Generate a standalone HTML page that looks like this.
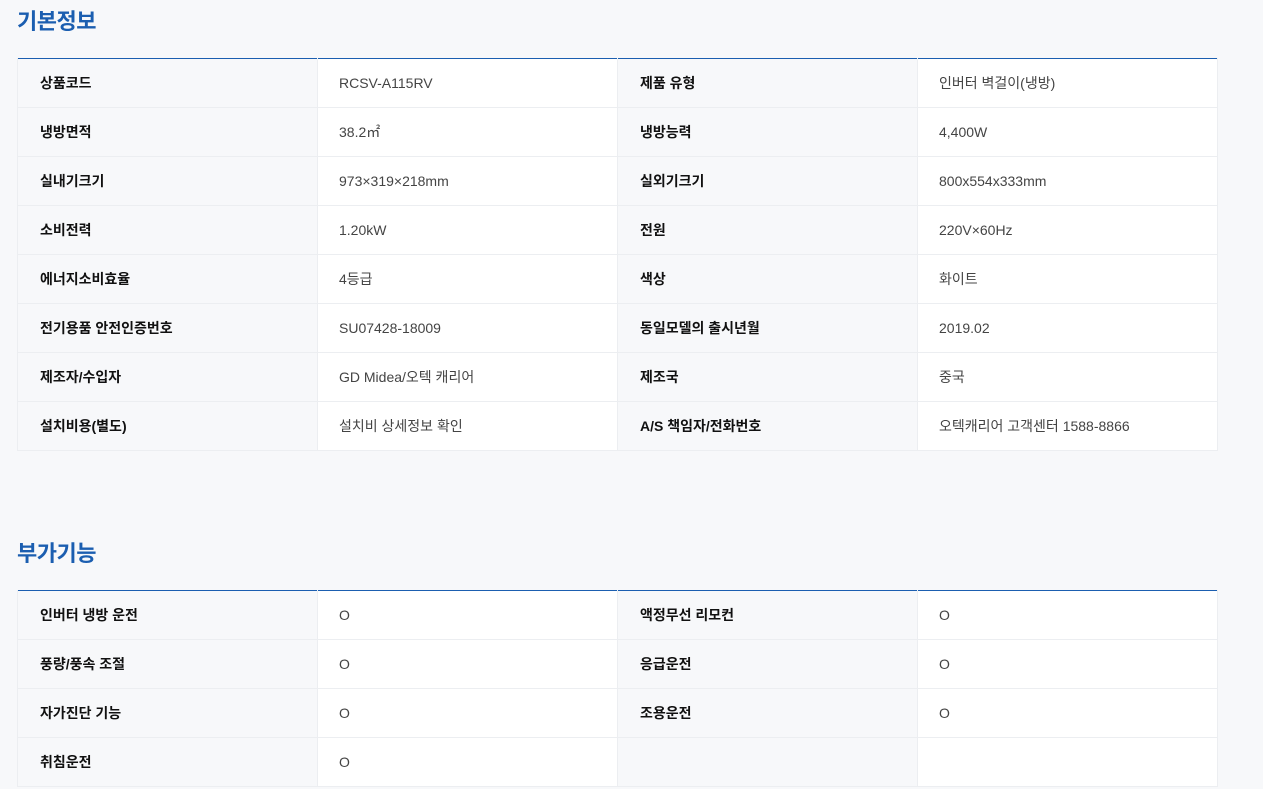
<!DOCTYPE html>
<html><head><meta charset="utf-8"><style>
*{margin:0;padding:0;box-sizing:border-box}
body{width:1263px;height:789px;background:#f7f8fa;font-family:"Liberation Sans","Noto Sans CJK KR",sans-serif;overflow:hidden;position:relative}
h2{position:absolute;left:17px;font-size:22px;font-weight:bold;color:#1b5eb0;letter-spacing:-0.5px}
table{position:absolute;left:17px;width:1200px;border-collapse:collapse;border-top:1px solid #1b5eb0;table-layout:fixed}
td{height:49px;border-bottom:1px solid #eceef1;border-right:1px solid #eceef1;font-size:14px;color:#444;padding-left:21px;vertical-align:middle}
td.l{background:#f7f8fa;color:#111;font-weight:bold;padding-left:22px}
td.v{background:#fff}
tr td:first-child{border-left:1px solid #eceef1}
</style></head><body>
<h2 style="top:4px">기본정보</h2>
<table style="top:58px">
<colgroup><col style="width:300px"><col style="width:300px"><col style="width:300px"><col style="width:300px"></colgroup>
<tr><td class="l">상품코드</td><td class="v">RCSV-A115RV</td><td class="l">제품 유형</td><td class="v">인버터 벽걸이(냉방)</td></tr>
<tr><td class="l">냉방면적</td><td class="v">38.2㎡</td><td class="l">냉방능력</td><td class="v">4,400W</td></tr>
<tr><td class="l">실내기크기</td><td class="v">973×319×218mm</td><td class="l">실외기크기</td><td class="v">800x554x333mm</td></tr>
<tr><td class="l">소비전력</td><td class="v">1.20kW</td><td class="l">전원</td><td class="v">220V×60Hz</td></tr>
<tr><td class="l">에너지소비효율</td><td class="v">4등급</td><td class="l">색상</td><td class="v">화이트</td></tr>
<tr><td class="l">전기용품 안전인증번호</td><td class="v">SU07428-18009</td><td class="l">동일모델의 출시년월</td><td class="v">2019.02</td></tr>
<tr><td class="l">제조자/수입자</td><td class="v">GD Midea/오텍 캐리어</td><td class="l">제조국</td><td class="v">중국</td></tr>
<tr><td class="l">설치비용(별도)</td><td class="v">설치비 상세정보 확인</td><td class="l">A/S 책임자/전화번호</td><td class="v">오텍캐리어 고객센터 1588-8866</td></tr>
</table>
<h2 style="top:536px">부가기능</h2>
<table style="top:590px">
<colgroup><col style="width:300px"><col style="width:300px"><col style="width:300px"><col style="width:300px"></colgroup>
<tr><td class="l">인버터 냉방 운전</td><td class="v">O</td><td class="l">액정무선 리모컨</td><td class="v">O</td></tr>
<tr><td class="l">풍량/풍속 조절</td><td class="v">O</td><td class="l">응급운전</td><td class="v">O</td></tr>
<tr><td class="l">자가진단 기능</td><td class="v">O</td><td class="l">조용운전</td><td class="v">O</td></tr>
<tr><td class="l">취침운전</td><td class="v">O</td><td class="l"></td><td class="v"></td></tr>
</table>
</body></html>
